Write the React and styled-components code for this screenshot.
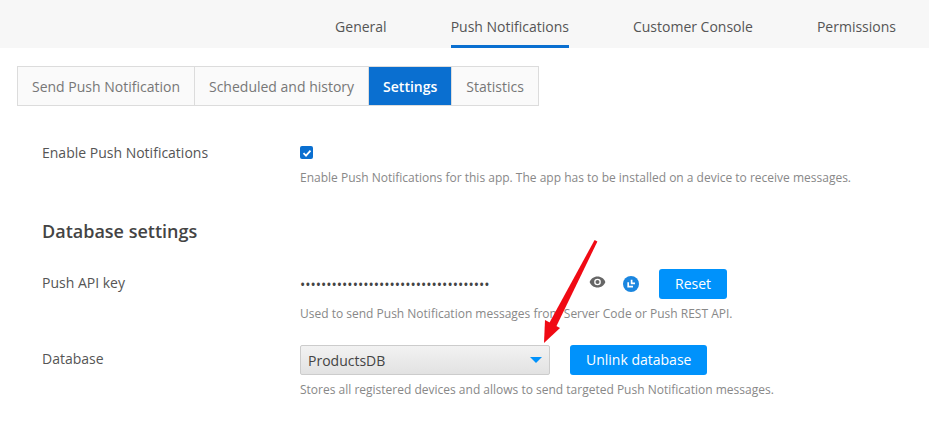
import { createGlobalStyle } from 'styled-components';
import styled from 'styled-components';

const GlobalStyle = createGlobalStyle`
  html, body {
    margin: 0;
    padding: 0;
    background: #fff;
    font-family: 'Open Sans', sans-serif;
    color: #555;
  }
`;

const Page = styled.div`
  position: relative;
  width: 929px;
  height: 432px;
  overflow: hidden;
`;

const TopBar = styled.nav`
  display: flex;
  justify-content: flex-end;
  gap: 64px;
  height: 48px;
  padding-right: 33px;
  background: #f7f7f7;
`;

const TopTab = styled.a`
  display: block;
  box-sizing: border-box;
  height: 48px;
  padding-top: 17px;
  font-size: 14px;
  line-height: 20px;
  color: #555;
  border-bottom: 3px solid ${(p) => (p.$active ? '#0a6fd0' : 'transparent')};
`;

const SubTabs = styled.div`
  display: flex;
  width: max-content;
  margin: 18px 0 0 17px;
  border: 1px solid #dcdcdc;
  background: #fafafa;
`;

const SubTab = styled.a`
  display: block;
  box-sizing: border-box;
  height: 38px;
  padding: 0 14px;
  font-size: 14px;
  line-height: 40px;
  color: ${(p) => (p.$active ? '#fff' : '#777')};
  font-weight: ${(p) => (p.$active ? 600 : 400)};
  background: ${(p) => (p.$active ? '#0a6fd0' : 'transparent')};
  border-left: 1px solid #dcdcdc;
  &:first-child {
    border-left: 0;
  }
`;

const Content = styled.div`
  padding: 0 0 0 42px;
`;

const Row = styled.div`
  display: flex;
  margin-top: ${(p) => p.$top}px;
`;

const Label = styled.div`
  width: 258px;
  flex: none;
  font-size: 14px;
  line-height: 20px;
  padding-top: ${(p) => p.$pad || 0}px;
  color: #555;
`;

const Field = styled.div`
  display: flex;
  flex-direction: column;
`;

const Hint = styled.div`
  font-size: 12px;
  line-height: 18px;
  color: #888;
`;

const Check = styled.span`
  display: flex;
  align-items: center;
  justify-content: center;
  width: 13px;
  height: 13px;
  margin: 3px 0 10px;
  border-radius: 2px;
  background: #0a6fd0;
`;

const SectionTitle = styled.h2`
  margin: 32px 0 0;
  font-size: 18px;
  line-height: 24px;
  font-weight: 600;
  color: #444;
`;

const KeyLine = styled.div`
  display: flex;
  align-items: center;
  height: 30px;
  margin-bottom: 6px;
`;

const Dots = styled.span`
  width: 289px;
  font-size: 14px;
  color: #444;
  letter-spacing: 0;
`;

const IconSlot = styled.span`
  display: flex;
  margin: 0 ${(p) => p.$gap}px ${(p) => p.$lift || 0}px 0;
`;

const Button = styled.button`
  height: 30px;
  padding: 0 ${(p) => p.$pad}px 2px;
  border: 0;
  border-radius: 3px;
  background: #0092fb;
  color: #fff;
  font-family: inherit;
  font-size: 14px;
`;

const Select = styled.div`
  display: flex;
  align-items: center;
  justify-content: space-between;
  box-sizing: border-box;
  width: 250px;
  height: 30px;
  padding: 0 7px;
  margin-right: 20px;
  border: 1px solid #ccc;
  border-radius: 2px;
  background: linear-gradient(#f2f2f2, #e2e2e2);
  font-size: 14px;
  color: #444;
`;

const Caret = styled.span`
  width: 0;
  height: 0;
  border-left: 6px solid transparent;
  border-right: 6px solid transparent;
  border-top: 6px solid #0092fb;
`;

const ArrowOverlay = styled.svg`
  position: absolute;
  left: 0;
  top: 0;
  pointer-events: none;
`;

export default function App() {
  return (
    <Page>
      <GlobalStyle />
      <TopBar>
        <TopTab>General</TopTab>
        <TopTab $active>Push Notifications</TopTab>
        <TopTab>Customer Console</TopTab>
        <TopTab>Permissions</TopTab>
      </TopBar>
      <SubTabs>
        <SubTab>Send Push Notification</SubTab>
        <SubTab>Scheduled and history</SubTab>
        <SubTab $active>Settings</SubTab>
        <SubTab>Statistics</SubTab>
      </SubTabs>
      <Content>
        <Row $top={37}>
          <Label>Enable Push Notifications</Label>
          <Field>
            <Check>
              <svg width="10" height="10" viewBox="0 0 10 10">
                <path d="M1.5 5.2 L4 7.6 L8.5 2.6" fill="none" stroke="#fff" strokeWidth="1.8" />
              </svg>
            </Check>
            <Hint>Enable Push Notifications for this app. The app has to be installed on a device to receive messages.</Hint>
          </Field>
        </Row>
        <SectionTitle>Database settings</SectionTitle>
        <Row $top={26}>
          <Label $pad={4}>Push API key</Label>
          <Field>
            <KeyLine>
              <Dots>••••••••••••••••••••••••••••••••••••</Dots>
              <IconSlot $gap={17} $lift={4}>
                <svg width="17" height="12" viewBox="0 0 18 13">
                  <path d="M9 0.5C5 0.5 1.8 3 0.5 6.5 1.8 10 5 12.5 9 12.5S16.2 10 17.5 6.5C16.2 3 13 0.5 9 0.5Z" fill="#666" />
                  <circle cx="9" cy="6.5" r="3.6" fill="#fff" />
                  <circle cx="9" cy="6.5" r="2.2" fill="#666" />
                </svg>
              </IconSlot>
              <IconSlot $gap={20}>
                <svg width="16" height="16" viewBox="0 0 16 16">
                  <circle cx="8" cy="8" r="8" fill="#1a86e0" />
                  <path d="M8.6 3.8V7.4H12M5.2 6.2V10.6H10" fill="none" stroke="#fff" strokeWidth="1.7" />
                </svg>
              </IconSlot>
              <Button $pad={16}>Reset</Button>
            </KeyLine>
            <Hint>Used to send Push Notification messages from Server Code or Push REST API.</Hint>
          </Field>
        </Row>
        <Row $top={22}>
          <Label $pad={4}>Database</Label>
          <Field>
            <KeyLine>
              <Select>
                ProductsDB
                <Caret />
              </Select>
              <Button $pad={16}>Unlink database</Button>
            </KeyLine>
            <Hint>Stores all registered devices and allows to send targeted Push Notification messages.</Hint>
          </Field>
        </Row>
      </Content>
      <ArrowOverlay width="929" height="432" viewBox="0 0 929 432">
        <path d="M594.6 240 L597.4 241.5 L556 327 L549 323.5 Z" fill="#f00a14" strokeLinejoin="round" />
        <path d="M544 343 L545 320 L560 328 Z" fill="#f00a14" />
      </ArrowOverlay>
    </Page>
  );
}
